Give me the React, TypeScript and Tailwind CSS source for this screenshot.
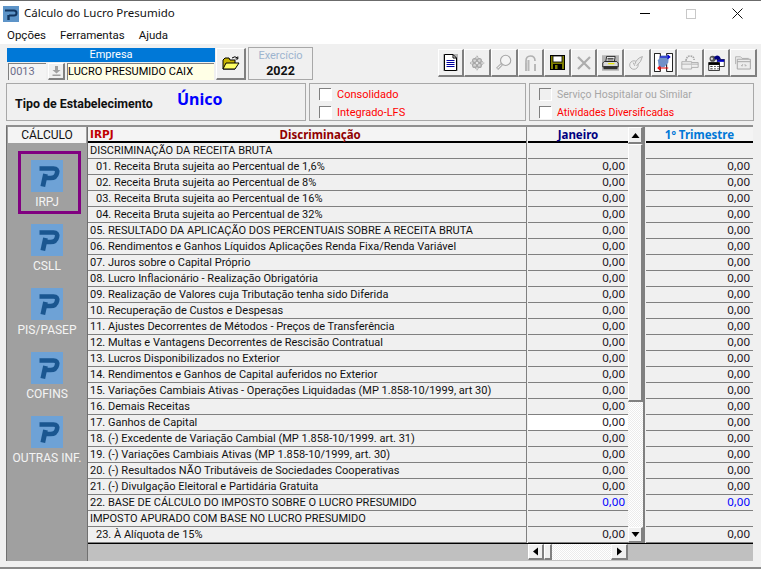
import React from "react";

const F = { fontFamily: '"Noto Sans", "Liberation Sans", sans-serif' };
const R = { fontFamily: 'Roboto, "Liberation Sans", sans-serif' };

type Row = { t: string; indent?: boolean; empty?: boolean; blue?: boolean };
const rows: Row[] = [
  { t: "DISCRIMINAÇÃO DA RECEITA BRUTA", empty: true },
  { t: "01. Receita Bruta sujeita ao Percentual de 1,6%", indent: true },
  { t: "02. Receita Bruta sujeita ao Percentual de 8%", indent: true },
  { t: "03. Receita Bruta sujeita ao Percentual de 16%", indent: true },
  { t: "04. Receita Bruta sujeita ao Percentual de 32%", indent: true },
  { t: "05. RESULTADO DA APLICAÇÃO DOS PERCENTUAIS SOBRE A RECEITA BRUTA" },
  { t: "06. Rendimentos e Ganhos Líquidos Aplicações Renda Fixa/Renda Variável" },
  { t: "07. Juros sobre o Capital Próprio" },
  { t: "08. Lucro Inflacionário - Realização Obrigatória" },
  { t: "09. Realização de Valores cuja Tributação tenha sido Diferida" },
  { t: "10. Recuperação de Custos e Despesas" },
  { t: "11. Ajustes Decorrentes de Métodos - Preços de Transferência" },
  { t: "12. Multas e Vantagens Decorrentes de Rescisão Contratual" },
  { t: "13. Lucros Disponibilizados no Exterior" },
  { t: "14. Rendimentos e Ganhos de Capital auferidos no Exterior" },
  { t: "15. Variações Cambiais Ativas - Operações Liquidadas (MP 1.858-10/1999, art 30)" },
  { t: "16. Demais Receitas" },
  { t: "17. Ganhos de Capital" },
  { t: "18. (-) Excedente de Variação Cambial (MP 1.858-10/1999. art. 31)" },
  { t: "19. (-) Variações Cambiais Ativas (MP 1.858-10/1999, art. 30)" },
  { t: "20. (-) Resultados NÃO Tributáveis de Sociedades Cooperativas" },
  { t: "21. (-) Divulgação Eleitoral e Partidária Gratuita" },
  { t: "22. BASE DE CÁLCULO DO IMPOSTO SOBRE O LUCRO PRESUMIDO", blue: true },
  { t: "IMPOSTO APURADO COM BASE NO LUCRO PRESUMIDO", empty: true },
  { t: "23. À Alíquota de 15%", indent: true },
];

const PLogo = () => (
  <svg width="32" height="32" viewBox="0 0 32 32" className="shrink-0">
    <rect width="32" height="32" fill="#6ea2d6" />
    <path d="M8.5 8.5 H22.5 Q27 8.5 26 13 Q25 18 19.5 18 H13" fill="none" stroke="#1a5690" strokeWidth="4.6" />
    <path d="M14.5 14 L11.8 26.5" fill="none" stroke="#1a5690" strokeWidth="4.8" />
  </svg>
);

const TitleIcon = () => (
  <svg width="16" height="16" viewBox="0 0 16 16">
    <rect width="16" height="16" fill="#5d94c8" />
    <path d="M2 4.5 H11 Q13.5 4.5 13.5 7 Q13.5 9.5 11 9.5 H6" fill="none" stroke="#12355f" strokeWidth="2" />
    <path d="M5.5 9 V14" stroke="#12355f" strokeWidth="2.4" />
  </svg>
);

const FolderIcon = () => (
  <svg width="18" height="15" viewBox="0 0 18 15">
    <path d="M1 4 L3 2 H7 L8 4 H13 V13 H1 Z" fill="#c8b400" stroke="#000" strokeWidth="1" />
    <path d="M1 13 L4 7 H17 L13 13 Z" fill="#ffff66" stroke="#000" strokeWidth="1" />
    <path d="M10 2 Q13 -0.5 15.5 2 M15.8 0.5 V3 H13.5" fill="none" stroke="#000" strokeWidth="1" />
  </svg>
);

const DisabledStroke = "#a6a6a6";

const toolIcons: React.ReactNode[] = [
  <svg key="doc" width="15" height="17" viewBox="0 0 15 17">
    <rect width="15" height="17" fill="#b4b4b4" />
    <path d="M1.5 0.5 H10 L13.5 4 V16.5 H1.5 Z" fill="#fff" stroke="#000" />
    <path d="M10 0.5 V4 H13.5" fill="none" stroke="#000" />
    <path d="M3.5 6.5 H11.5 M3.5 8.5 H11.5 M3.5 10.5 H11.5 M3.5 12.5 H11.5" stroke="#0000a0" />
  </svg>,
  <svg key="flower" width="16" height="16" viewBox="0 0 20 20">
    <path d="M10 1 L14 6 L19 10 L14 14 L10 19 L6 14 L1 10 L6 6 Z" fill="#d4d4d4" stroke={DisabledStroke} strokeDasharray="2 1" />
    <circle cx="7" cy="7" r="2.5" fill="none" stroke={DisabledStroke} strokeWidth="1.4" />
    <circle cx="13" cy="7" r="2.5" fill="none" stroke={DisabledStroke} strokeWidth="1.4" />
    <circle cx="7" cy="13" r="2.5" fill="none" stroke={DisabledStroke} strokeWidth="1.4" />
    <circle cx="13" cy="13" r="2.5" fill="none" stroke={DisabledStroke} strokeWidth="1.4" />
    <circle cx="10" cy="10" r="2" fill="#ececec" stroke={DisabledStroke} />
  </svg>,
  <svg key="mag" width="17" height="17" viewBox="0 0 20 20">
    <circle cx="12.5" cy="7.5" r="6" fill="#f4f4f4" stroke={DisabledStroke} strokeWidth="1.3" />
    <path d="M8 12 L2.5 17.5" stroke={DisabledStroke} strokeWidth="3.4" />
    <path d="M7.5 12.5 L3 17" stroke="#f4f4f4" strokeWidth="1.2" />
  </svg>,
  <svg key="bridge" width="13" height="16" viewBox="0 0 13 16">
    <path d="M2 16 V6 Q2 1 6.5 1 Q11 1 11 6" fill="none" stroke="#b0b0b0" strokeWidth="1.6" />
    <path d="M2 8 V16 M4.5 5 V16 M11 9 V16" stroke="#b8b8b8" strokeWidth="2" />
  </svg>,
  <svg key="save" width="15" height="15" viewBox="0 0 15 15">
    <rect x="0.5" y="0.5" width="14" height="14" fill="#808000" stroke="#000" />
    <rect x="3" y="1" width="9" height="6" fill="#fff" stroke="#000" strokeWidth="0.8" />
    <rect x="3" y="9" width="9" height="6" fill="#000" />
    <rect x="5" y="10" width="2.5" height="4" fill="#808000" />
  </svg>,
  <svg key="x" width="14" height="14" viewBox="0 0 14 14">
    <path d="M1 1 L13 13 M13 1 L1 13" stroke="#adadad" strokeWidth="2.2" />
  </svg>,
  <svg key="print" width="17" height="16" viewBox="0 0 22 20">
    <rect width="22" height="20" fill="#b4b4b4" />
    <path d="M6 1.5 H17 L16 8 H5 Z" fill="#fff" stroke="#000" />
    <path d="M7 4 H15 M7 6 H15" stroke="#000" />
    <path d="M3 8 H19 L21 10 V15 H1 V10 Z" fill="#d8d8d8" stroke="#000" />
    <rect x="8" y="10" width="8" height="1.6" fill="#e6e600" />
    <rect x="2" y="14" width="18" height="4" fill="#303030" />
  </svg>,
  <svg key="feather" width="17" height="17" viewBox="0 0 20 20">
    <circle cx="7" cy="13" r="5" fill="none" stroke={DisabledStroke} />
    <path d="M8 12 Q10 5 17 3 Q16 9 10 14 M6 10 L8 14" fill="#e8e8e8" stroke={DisabledStroke} />
  </svg>,
  <svg key="swap" width="19" height="19" viewBox="0 0 24 24">
    <rect x="0.5" y="0.5" width="23" height="23" fill="#fff" />
    <path d="M0.5 0.5 H8 V23.5 H0.5 Z M16 0.5 H23.5 V23.5 H16 Z" fill="#fff" stroke="#000" strokeWidth="1.2" />
    <path d="M5 9 L9 3 H19 L18 12 L13 18 H6 Z" fill="#6f90c8" />
    <path d="M7 5 H20 M17 2.5 L20 5 L17 7.5" fill="none" stroke="#0000d0" strokeWidth="1.4" />
    <path d="M18 19 H5 M8 16.5 L5 19 L8 21.5" fill="none" stroke="#f00000" strokeWidth="1.4" />
  </svg>,
  <svg key="stack" width="18" height="17" viewBox="0 0 22 20">
    <path d="M1 9 H13 V18 H1 Z M1 12 H13" fill="#efefef" stroke={DisabledStroke} />
    <path d="M13 10 H21 V16 H13 M13 12 H21" fill="#efefef" stroke={DisabledStroke} />
    <path d="M6 8 Q7 2 11 2 Q16 2 16 7" fill="none" stroke={DisabledStroke} strokeWidth="2" strokeDasharray="2 1" />
  </svg>,
  <svg key="cal" width="17" height="18" viewBox="0 0 22 21">
    <circle cx="6" cy="5" r="4" fill="#555" />
    <circle cx="5" cy="5" r="1.5" fill="#ddd" />
    <path d="M8 3 Q11 -1 15 2 L17 6 H9 Z" fill="#000080" />
    <rect x="12" y="6" width="9" height="9" fill="#fff" stroke="#000" />
    <rect x="12" y="6" width="9" height="3" fill="#0000c0" />
    <rect x="1" y="10" width="14" height="10" fill="#fff" stroke="#000" />
    <rect x="1" y="10" width="14" height="3" fill="#000" />
    <path d="M3 15 H6 M8 15 H10 M12 15 H14 M3 18 H6 M8 18 H10 M12 18 H14" stroke="#000" />
  </svg>,
  <svg key="folders" width="18" height="17" viewBox="0 0 22 20">
    <path d="M2 12 V3 H8 L10 5 H18" fill="none" stroke={DisabledStroke} />
    <path d="M4 18 V6 H20 V18 Z M4 9 H20" fill="#ececec" stroke={DisabledStroke} strokeWidth="1.2" />
    <path d="M9 14 L11 12 M13 12 L15 14 M9 14 H11 M13 14 H15" stroke={DisabledStroke} />
  </svg>,
];

const Raised = ({ className, children }: { className: string; children?: React.ReactNode }) => (
  <div className={`flex items-center justify-center shrink-0 bg-[#f0f0f0] border-t border-l border-t-white border-l-white border-b-2 border-r-2 border-b-[#808080] border-r-[#808080] ${className}`}>
    {children}
  </div>
);

const Check = ({ off }: { off?: boolean }) => (
  <span className={`block w-[12px] h-[12px] border-t border-l border-t-[#808080] border-l-[#808080] shadow-[1px_1px_0_#ffffff] ${off ? "bg-[#f0f0f0]" : "bg-white"}`} />
);

const Side = ({ label }: { label: string }) => (
  <div className="h-[64px] flex flex-col items-center pt-[9px]">
    <PLogo />
    <span className="mt-[3px] text-[12px] leading-[14px] whitespace-nowrap text-[#f4f4f4]">{label}</span>
  </div>
);

const Cell = ({ white, blue, empty }: { white?: boolean; blue?: boolean; empty?: boolean }) => (
  <div className={`h-[16px] shrink-0 border-b border-[#808080] text-right pr-[3px] text-[11.5px] leading-[14px] ${white ? "bg-white" : ""} ${blue ? "text-[#0000ff]" : "text-[#1a1020]"}`}>
    {empty ? "" : "0,00"}
  </div>
);

const Arrow = ({ d }: { d: string }) => (
  <svg width="9" height="9" viewBox="0 0 9 9"><path d={d} fill="#000" /></svg>
);

export default function App() {
  return (
    <div style={F} className="w-[761px] h-[570px] bg-white flex flex-col overflow-hidden text-black relative">
      {/* title */}
      <div className="h-[26px] shrink-0 border-t border-[#6b6b6b] flex items-center pl-[3px]">
        <TitleIcon />
        <span className="ml-[5px] mb-[2px] text-[11.5px] leading-[16px] text-[#111]">Cálculo do Lucro Presumido</span>
        <div className="ml-auto flex items-center h-full">
          <div className="w-[46px] flex justify-center"><div className="w-[10px] h-[1px] bg-black" /></div>
          <div className="w-[46px] flex justify-center"><div className="w-[10px] h-[10px] border border-[#c8c8c8]" /></div>
          <div className="w-[46px] flex justify-center mr-[1px]">
            <svg width="11" height="11" viewBox="0 0 11 11"><path d="M0.5 0.5 L10.5 10.5 M10.5 0.5 L0.5 10.5" stroke="#111" /></svg>
          </div>
        </div>
      </div>
      {/* menu */}
      <div style={R} className="h-[18px] shrink-0 flex items-center pt-[1px] pl-[7px] gap-[14px] text-[11.5px] text-[#111]">
        <span>Opções</span><span>Ferramentas</span><span>Ajuda</span>
      </div>
      {/* body */}
      <div className="flex-1 min-h-0 bg-[#f0f0f0] flex flex-col border-b-2 border-b-[#8a8a8a] mb-[1px]">
        {/* toolbar row */}
        <div className="h-[38px] shrink-0 flex pt-[3px]">
          <div style={R} className="ml-[7px] w-[208px] flex flex-col">
            <div className="h-[14px] mt-[1px] bg-[#0078d7] text-white text-[11px] leading-[14px] text-center">Empresa</div>
            <div className="flex h-[18px] mt-[1px]">
              <div className="w-[38px] ml-[1px] h-[17px] bg-[#f4f4f4] border-t border-l border-t-[#808080] border-l-[#808080] text-[11px] leading-[16px] text-[#6d6d8a] pl-[1px]">0013</div>
              <Raised className="w-[17px] h-[17px] ml-[2px]">
                <svg width="9" height="10" viewBox="0 0 9 10"><path d="M3 0 H6 V4 H8.5 L4.5 7.5 L0.5 4 H3 Z M0.5 8.5 H8.5 V10 H0.5 Z" fill="#a0a0a0" /></svg>
              </Raised>
              <div className="w-[147px] ml-[2px] h-[17px] bg-[#ffffe6] border-t border-l border-t-[#808080] border-l-[#808080] text-[11px] leading-[15px] whitespace-nowrap overflow-hidden">LUCRO PRESUMIDO CAIX</div>
            </div>
          </div>
          <Raised className="w-[30px] h-[32px] ml-[1px] mt-[1px]"><FolderIcon /></Raised>
          <div style={R} className="w-[65px] h-[33px] ml-[2px] border border-[#a8a8a8] flex flex-col items-center pt-[1px]">
            <span className="text-[#9db4cf] text-[11px] leading-[14px]">Exercício</span>
            <span className="font-bold text-[12.5px] leading-[15px] text-[#111]">2022</span>
          </div>
          <div className="ml-auto mr-[4px] mt-[2px] flex">
            {toolIcons.map((ic, i) => (
              <Raised key={i} className="w-[26.6px] h-[28px]">{ic}</Raised>
            ))}
          </div>
        </div>
        {/* options row */}
        <div style={R} className="h-[39px] shrink-0 flex mt-[1px] ml-[6px]">
          <div className="w-[300px] h-[38px] border border-[#a8a8a8] flex">
            <span className="w-[162px] shrink-0 font-bold ml-[8px] mt-[11px] text-[12.4px] text-[#111]">Tipo de Estabelecimento</span>
            <span className="font-bold text-[#0000ff] text-[16px] mt-[3px]" style={F}>Único</span>
          </div>
          <div className="w-[217px] h-[38px] ml-[3px] border border-[#a8a8a8] flex flex-col pl-[9px] pt-[3px] gap-[4px] text-[11px] text-[#ff0000] leading-[15px]">
            <div className="h-[14px] flex items-center gap-[6px]"><Check /><span className="pt-[1px]">Consolidado</span></div>
            <div className="h-[14px] flex items-center gap-[6px]"><Check /><span className="pt-[1px]">Integrado-LFS</span></div>
          </div>
          <div className="w-[225px] h-[38px] ml-[3px] border border-[#a8a8a8] flex flex-col pl-[9px] pt-[3px] gap-[4px] text-[10.5px] leading-[15px]">
            <div className="h-[14px] flex items-center gap-[6px] text-[#a6a6a6]"><Check off /><span className="pt-[1px]">Serviço Hospitalar ou Similar</span></div>
            <div className="h-[14px] flex items-center gap-[6px] text-[#ff0000]"><Check /><span className="pt-[1px]">Atividades Diversificadas</span></div>
          </div>
        </div>
        {/* grid */}
        <div className="ml-[6px] w-[747px] h-[436px] mt-[3px] shrink-0 border-t-2 border-t-[#909090] border-l border-l-[#707070] flex">
          {/* side */}
          <div style={R} className="w-[81px] shrink-0 flex flex-col border-r border-r-[#707070] bg-[#a0a0a0]">
            <div className="h-[16px] shrink-0 mx-[1px] bg-[#f4f4f4] text-[12px] leading-[16px] text-center text-[#111]">CÁLCULO</div>
            <div className="flex flex-col mt-[8px] relative">
              <div className="absolute left-[11px] top-0 w-[63px] h-[63px] border-[3px] border-[#800080]" />
              <div className="w-[80px] flex flex-col">
                <Side label="IRPJ" />
                <Side label="CSLL" />
                <Side label="PIS/PASEP" />
                <Side label="COFINS" />
                <Side label="OUTRAS INF." />
              </div>
            </div>
          </div>
          {/* table */}
          <div className="flex-1 min-w-0 flex flex-col">
            <div className="h-[417px] flex border-b border-b-black">
              {/* discriminação */}
              <div className="w-[439px] shrink-0 flex flex-col border-r border-r-[#808080]">
                <div className="h-[16px] shrink-0 bg-[#f4f4f4] border-b-2 border-b-black flex text-[11.5px] leading-[15px] font-bold">
                  <span className="text-[#c00000] pl-[2px]" style={{ fontFamily: '"DejaVu Sans", sans-serif', fontSize: 10.5 }}>IRPJ</span>
                  <span className="text-[#900000] ml-[166px]">Discriminação</span>
                </div>
                {rows.map((r) => (
                  <div key={r.t} style={R} className={`h-[16px] shrink-0 border-b border-[#808080] text-[11px] leading-[15px] whitespace-nowrap text-[#111] ${r.indent ? "pl-[8px]" : "pl-[2px]"}`}>
                    {r.t}
                  </div>
                ))}
              </div>
              {/* janeiro */}
              <div className="w-[100px] shrink-0 ml-[1px] flex flex-col">
                <div className="h-[16px] shrink-0 bg-[#f4f4f4] border-b-2 border-b-black text-center text-[11.5px] leading-[15px] font-bold text-[#000080]">Janeiro</div>
                {rows.map((r, i) => <Cell key={i} white={i === 17} blue={r.blue} empty={r.empty} />)}
              </div>
              {/* scrollbar */}
              <div className="w-[17px] shrink-0 flex flex-col border-r-2 border-r-[#808080]">
                <Raised className="w-[15px] h-[17px]"><Arrow d="M4.5 2 L8.5 7 H0.5 Z" /></Raised>
                <Raised className="w-[15px] h-[258px]" />
                <div className="flex-1 w-[15px] bg-[repeating-conic-gradient(#ffffff_0_25%,#ececec_0_50%)] bg-[length:2px_2px]" />
                <Raised className="w-[15px] h-[16px]"><Arrow d="M4.5 7 L8.5 2 H0.5 Z" /></Raised>
              </div>
              {/* trimestre */}
              <div className="flex-1 min-w-0 ml-[1px] flex flex-col">
                <div className="h-[16px] shrink-0 bg-[#f4f4f4] border-b-2 border-b-black text-center text-[11.5px] leading-[15px] font-bold text-[#0078d7]">1º Trimestre</div>
                {rows.map((r, i) => <Cell key={i} blue={r.blue} empty={r.empty} />)}
              </div>
            </div>
            {/* bottom bar */}
            <div className="h-[17px] shrink-0 bg-[#c0c0c0] flex">
              <div className="ml-[440px] w-[100px] h-[16px] flex">
                <Raised className="w-[16px] h-[16px]"><Arrow d="M2 4.5 L7 0.5 V8.5 Z" /></Raised>
                <Raised className="w-[8px] h-[16px]" />
                <div className="flex-1 bg-[repeating-conic-gradient(#ffffff_0_25%,#ececec_0_50%)] bg-[length:2px_2px]" />
                <Raised className="w-[17px] h-[16px]"><Arrow d="M7 4.5 L2 0.5 V8.5 Z" /></Raised>
              </div>
            </div>
          </div>
        </div>
      </div>
    </div>
  );
}
